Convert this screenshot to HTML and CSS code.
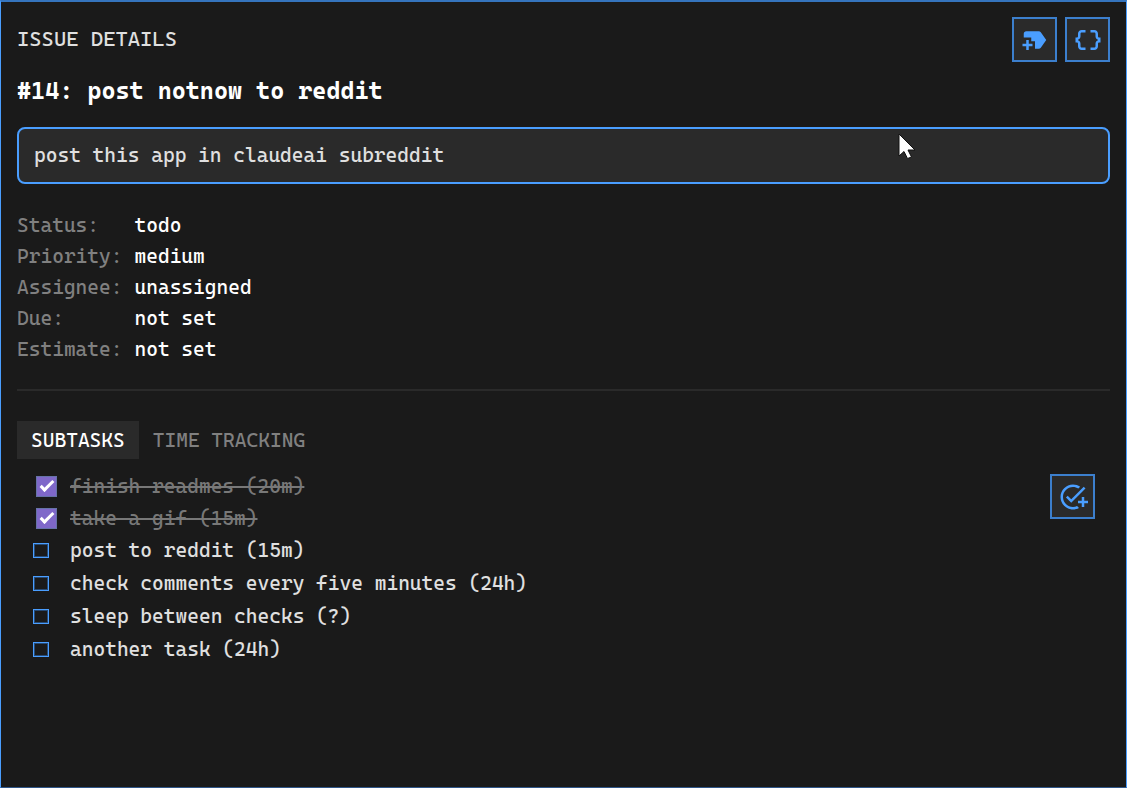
FILE: index.html
```html
<!DOCTYPE html>
<html lang="en">
<head>
    <meta charset="UTF-8">
    <meta name="viewport" content="width=device-width, initial-scale=1.0">
    <title>Issue Details</title>
    <link rel="stylesheet" href="styles.css">
</head>
<body>
    <main class="panel">
        <header class="panel-header">
            <h1>ISSUE DETAILS</h1>
            <div class="actions">
                <button type="button" class="icon-btn" aria-label="Add label">
                    <svg viewBox="0 0 24 24"><path d="M21 12l-4.37 6.16c-.37.52-.98.84-1.63.84h-3v-6H9v-3H3V7c0-1.1.9-2 2-2h10c.65 0 1.26.31 1.63.84L21 12zm-11 3H7v-3H5v3H2v2h3v3h2v-3h3v-2z"/></svg>
                </button>
                <button type="button" class="icon-btn" aria-label="View JSON">
                    <svg viewBox="0 0 24 24"><path d="M4 7v2c0 .55-.45 1-1 1H2v4h1c.55 0 1 .45 1 1v2c0 1.65 1.35 3 3 3h3v-2H7c-.55 0-1-.45-1-1v-2c0-1.3-.84-2.42-2-2.83v-.34C5.16 11.42 6 10.3 6 9V7c0-.55.45-1 1-1h3V4H7C5.35 4 4 5.35 4 7zM21 10c-.55 0-1-.45-1-1V7c0-1.65-1.35-3-3-3h-3v2h3c.55 0 1 .45 1 1v2c0 1.3.84 2.42 2 2.83v.34c-1.16.41-2 1.52-2 2.83v2c0 .55-.45 1-1 1h-3v2h3c1.65 0 3-1.35 3-3v-2c0-.55.45-1 1-1h1v-4h-1z"/></svg>
                </button>
            </div>
        </header>

        <h2 class="issue-title">#14: post notnow to reddit</h2>

        <div class="description">
            post this app in claudeai subreddit
            <svg class="cursor" viewBox="0 0 18 27"><path d="M1 1v22l5-4.500 3.500 7 4-1.500-3.500-7h7z"/></svg>
        </div>

        <dl class="meta">
            <dt>Status:</dt><dd>todo</dd>
            <dt>Priority:</dt><dd>medium</dd>
            <dt>Assignee:</dt><dd>unassigned</dd>
            <dt>Due:</dt><dd>not set</dd>
            <dt>Estimate:</dt><dd>not set</dd>
        </dl>

        <hr>

        <div class="tabs" role="tablist">
            <button type="button" class="tab active" role="tab" aria-selected="true">SUBTASKS</button>
            <button type="button" class="tab" role="tab" aria-selected="false">TIME TRACKING</button>
        </div>

        <section class="tab-content">
            <ul class="subtasks">
                <li class="done"><input type="checkbox" id="task1" checked><label for="task1">finish readmes (20m)</label></li>
                <li class="done"><input type="checkbox" id="task2" checked><label for="task2">take a gif (15m)</label></li>
                <li><input type="checkbox" id="task3"><label for="task3">post to reddit (15m)</label></li>
                <li><input type="checkbox" id="task4"><label for="task4">check comments every five minutes (24h)</label></li>
                <li><input type="checkbox" id="task5"><label for="task5">sleep between checks (?)</label></li>
                <li><input type="checkbox" id="task6"><label for="task6">another task (24h)</label></li>
            </ul>
            <button type="button" class="icon-btn add-task" aria-label="Add subtask">
                <svg viewBox="0 0 24 24"><path d="M22 5.180L10.590 16.600l-4.240-4.240 1.410-1.410 2.830 2.830 10-10L22 5.180zM12 20c-4.410 0-8-3.590-8-8s3.590-8 8-8c1.570 0 3.040.46 4.280 1.250l1.450-1.450C16.100 2.670 14.130 2 12 2 6.480 2 2 6.480 2 12s4.480 10 10 10c1.730 0 3.360-.44 4.780-1.220l-1.500-1.500c-1 .46-2.110.72-3.280.72zm7-5h-3v2h3v3h2v-3h3v-2h-3v-3h-2v3z"/></svg>
            </button>
        </section>
    </main>
</body>
</html>
```

FILE: styles.css
```css
* {
    box-sizing: border-box;
}

body {
    margin: 0;
    background: #1a1a1a;
    color: #e0e0e0;
    font-family: "Cascadia Mono", "DejaVu Sans Mono", monospace;
    font-size: 20px;
    line-height: 31px;
}

.panel {
    min-height: 100vh;
    padding: 15px 16px;
    border: 1px solid #4a9eff;
    border-top: 2px solid #3574bd;
    border-bottom-color: #2f5688;
}

.panel-header {
    display: flex;
    justify-content: space-between;
    align-items: center;
}

h1 {
    margin: 0;
    font-size: 21px;
    font-weight: normal;
}

.actions {
    display: flex;
    gap: 8px;
}

.icon-btn {
    display: flex;
    align-items: center;
    justify-content: center;
    width: 45px;
    height: 45px;
    padding: 0;
    background: #2a2a2a;
    border: 2px solid #3c7fcd;
    cursor: pointer;
}

.icon-btn svg {
    width: 30px;
    height: 30px;
    flex: none;
    fill: #4a9eff;
}

.issue-title {
    margin: 14px 0 20px;
    color: #fff;
    font-size: 24px;
    font-weight: bold;
}

.description {
    position: relative;
    padding: 11px 15px;
    background: #2a2a2a;
    border: 2px solid #4a9eff;
    border-radius: 8px;
}

/* pointer floats over the description */
.cursor {
    position: absolute;
    top: 4px;
    right: 192px;
    width: 18px;
    height: 27px;
    fill: #fff;
    stroke: #111;
    stroke-width: 1;
}

.meta {
    display: grid;
    grid-template-columns: max-content 1fr;
    column-gap: 12px;
    margin: 26px 0 24px;
}

.meta dt {
    color: #808080;
}

.meta dd {
    margin: 0;
    color: #fff;
}

hr {
    height: 2px;
    margin: 0 0 30px;
    border: none;
    background: #2a2a2a;
}

.tabs {
    display: flex;
}

.tab {
    height: 38px;
    padding: 0 14px;
    border: none;
    background: none;
    color: #808080;
    font: inherit;
    cursor: pointer;
}

.tab.active {
    background: #2a2a2a;
    color: #fff;
}

.tab-content {
    display: flex;
    justify-content: space-between;
    align-items: flex-start;
    padding: 0 15px;
}

.subtasks {
    list-style: none;
    margin: 0;
    padding: 11px 0 0;
}

.subtasks li {
    display: grid;
    grid-template-columns: 38px auto;
    align-items: center;
    min-height: 33px;
}

.subtasks .done {
    min-height: 32px;
    color: #787878;
    text-decoration: line-through;
}

.subtasks input {
    appearance: none;
    width: 16px;
    height: 15px;
    margin: 0 1px;
    border: 1px solid #4a9eff;
    box-shadow: inset 0 0 0 1px #264a75;
}

.subtasks input:checked {
    width: 21px;
    height: 21px;
    margin: 0 4px;
    display: flex;
    align-items: center;
    justify-content: center;
    border-color: #6673a8;
    background: #7f68c9;
    box-shadow: none;
}

.subtasks input:checked::before {
    content: "";
    width: 11px;
    height: 4px;
    border: solid #fff;
    border-width: 0 0 3px 3px;
    transform: translateY(-2px) rotate(-45deg);
}

.add-task {
    margin-top: 15px;
}
```
